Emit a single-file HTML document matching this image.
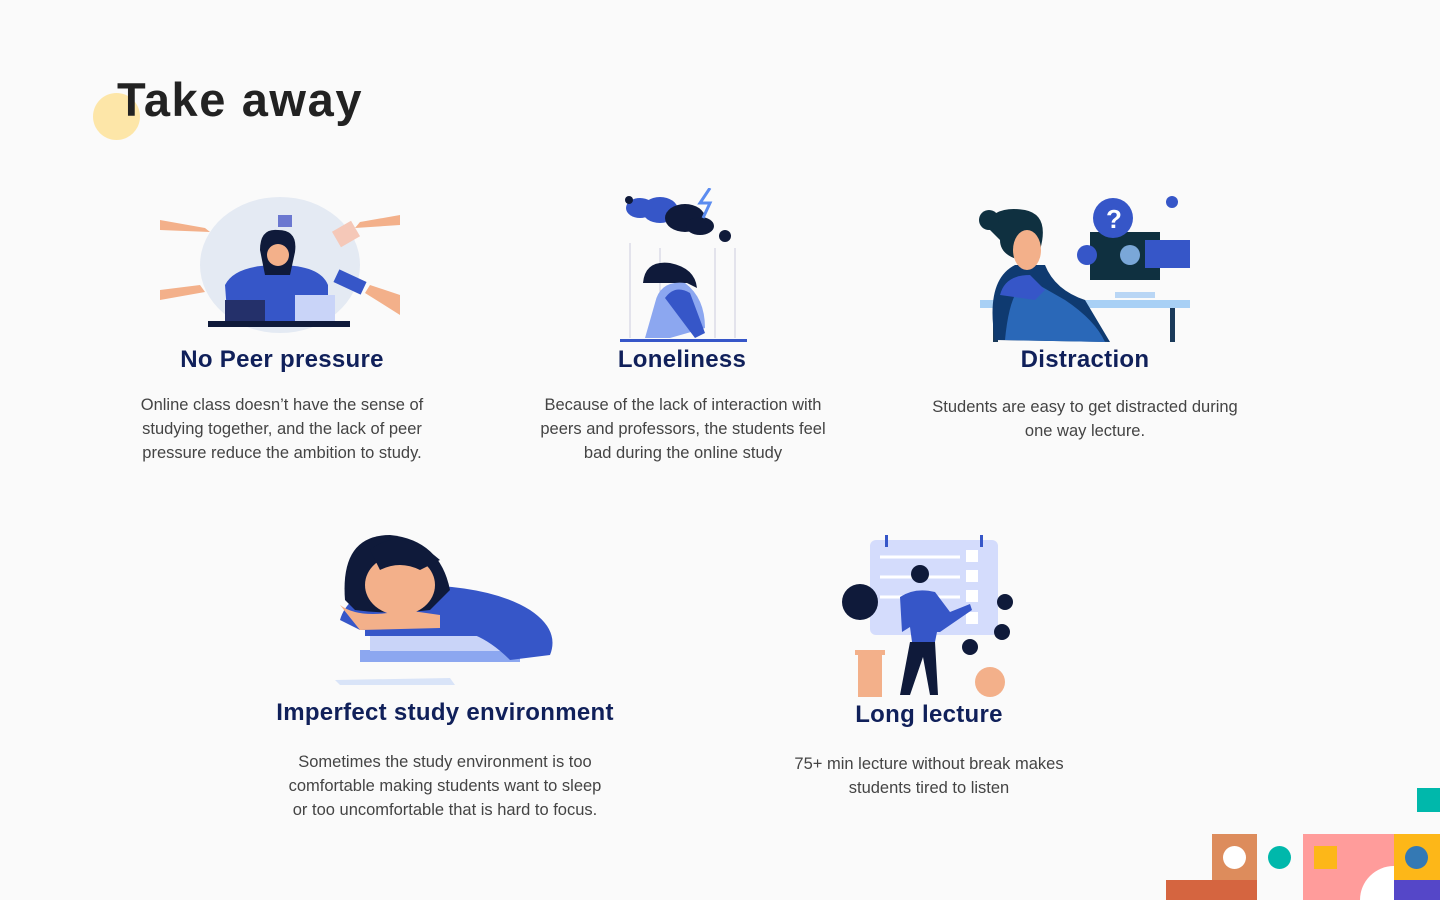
<!DOCTYPE html>
<html><head><meta charset="utf-8"><style>
*{margin:0;padding:0;box-sizing:border-box}
body{width:1440px;height:900px;background:#fafafa;position:relative;overflow:hidden;font-family:"Liberation Sans",sans-serif}
.a{position:absolute}
h1{position:absolute;left:117px;top:72px;font-size:47px;font-weight:bold;color:#222;letter-spacing:1.6px}
.t{position:absolute;text-align:center;font-weight:bold;font-size:24px;color:#10205a;letter-spacing:0.3px}
.p{position:absolute;text-align:center;font-size:16.5px;line-height:24px;color:#444}
</style></head><body>
<div class="a" style="left:93px;top:93px;width:47px;height:47px;border-radius:50%;background:#fde6a8"></div>
<h1>Take away</h1>

<svg class="a" style="left:160px;top:190px" width="245" height="145">
<ellipse cx="120" cy="75" rx="80" ry="68" fill="#e4eaf3"/>
<rect x="118" y="25" width="14" height="12" fill="#6b78d0"/>
<path d="M65 95 Q75 75 118 75 Q160 75 168 95 L168 135 L68 135 Z" fill="#3656c8"/>
<circle cx="118" cy="60" r="16" fill="#f3b08a"/>
<path d="M100 60 Q100 38 118 40 Q138 40 135 62 L130 85 L105 85Z" fill="#0f1a3a"/>
<circle cx="118" cy="65" r="11" fill="#f3b08a"/>
<path d="M0 30 L45 38 L50 42 L0 40Z" fill="#f3b08a"/>
<path d="M240 25 L200 32 L195 38 L240 35Z" fill="#f3b08a"/>
<path d="M0 100 L40 95 L45 102 L0 110Z" fill="#f3b08a"/>
<path d="M240 105 L210 95 L205 103 L240 125Z" fill="#f3b08a"/>
<rect x="175" y="85" width="30" height="14" fill="#3656c8" transform="rotate(25 190 92)"/>
<rect x="175" y="35" width="22" height="18" fill="#f5c8b8" transform="rotate(-30 186 44)"/>
<rect x="135" y="105" width="40" height="27" fill="#c9d4f8"/>
<rect x="65" y="110" width="40" height="22" fill="#24306a"/>
<rect x="48" y="131" width="142" height="6" fill="#0f1a3a"/>
</svg>

<svg class="a" style="left:615px;top:188px" width="135" height="156">
<ellipse cx="25" cy="20" rx="14" ry="10" fill="#3656c8"/>
<ellipse cx="45" cy="22" rx="18" ry="13" fill="#3656c8"/>
<ellipse cx="70" cy="30" rx="20" ry="14" fill="#0f1a3a"/>
<ellipse cx="85" cy="38" rx="14" ry="9" fill="#0f1a3a"/>
<circle cx="110" cy="48" r="6" fill="#0f1a3a"/>
<circle cx="14" cy="12" r="4" fill="#0f1a3a"/>
<path d="M95 0 L85 15 L95 15 L88 30" stroke="#5b8cf0" stroke-width="3" fill="none"/>
<g stroke="#ccd" stroke-width="1"><line x1="15" y1="55" x2="15" y2="150"/><line x1="45" y1="60" x2="45" y2="150"/><line x1="100" y1="60" x2="100" y2="150"/><line x1="120" y1="60" x2="120" y2="150"/></g>
<path d="M28 95 Q30 72 55 75 Q80 80 82 100 L72 95 Z" fill="#0f1a3a"/>
<path d="M40 115 Q45 92 70 95 Q90 110 90 140 L55 150 L30 150 Z" fill="#8ca7f0"/>
<path d="M50 110 Q60 96 75 105 L90 145 L80 150 Z" fill="#3656c8"/>
<rect x="5" y="151" width="127" height="3" fill="#3656c8"/>
</svg>

<svg class="a" style="left:975px;top:190px" width="220" height="155">
<rect x="5" y="110" width="210" height="8" fill="#a8d0f5"/>
<rect x="18" y="118" width="5" height="34" fill="#1a3a5a"/><rect x="195" y="118" width="5" height="34" fill="#1a3a5a"/>
<rect x="115" y="42" width="70" height="48" fill="#0f3040"/>
<rect x="170" y="50" width="45" height="28" fill="#3656c8"/>
<circle cx="155" cy="65" r="10" fill="#7aa7d8"/>
<circle cx="138" cy="28" r="20" fill="#3656c8"/>
<text x="131" y="38" font-size="26" font-weight="bold" fill="#fff" font-family="Liberation Sans">?</text>
<circle cx="112" cy="65" r="10" fill="#3656c8"/>
<circle cx="197" cy="12" r="6" fill="#3656c8"/>
<rect x="140" y="102" width="40" height="6" fill="#b9d6f5"/>
<path d="M20 150 Q10 90 40 75 L70 75 Q80 100 110 110 L135 152Z" fill="#0f3a70"/>
<path d="M30 150 Q35 95 55 90 L90 110 Q120 130 130 152Z" fill="#2a68b8"/>
<path d="M25 105 Q30 85 55 85 L70 100 L60 110 Z" fill="#3656c8"/>
<path d="M10 35 Q20 15 50 20 Q75 25 65 60 L45 70 Q25 65 25 50 Z" fill="#0f3040"/>
<ellipse cx="52" cy="60" rx="14" ry="20" fill="#f3b08a"/>
<circle cx="14" cy="30" r="10" fill="#0f3040"/>
</svg>

<svg class="a" style="left:330px;top:530px" width="230" height="160">
<rect x="30" y="120" width="160" height="12" fill="#8ca7f0"/>
<rect x="40" y="105" width="130" height="16" fill="#c9d4f8"/>
<rect x="35" y="90" width="140" height="16" fill="#3656c8"/>
<path d="M10 90 Q20 55 80 55 Q160 55 200 80 Q230 100 220 125 L180 130 Q150 100 120 100 L30 100 Z" fill="#3656c8"/>
<path d="M15 70 Q10 5 60 5 Q110 10 120 60 L100 80 Q60 85 25 80Z" fill="#0f1a3a"/>
<ellipse cx="70" cy="55" rx="35" ry="30" fill="#f3b08a"/>
<path d="M40 20 Q70 -5 110 30 L90 40 Q70 30 50 40Z" fill="#0f1a3a"/>
<path d="M10 75 Q30 90 75 80 L110 85 L110 98 L30 100Z" fill="#f3b08a"/>
<path d="M5 150 L120 148 L125 155 L10 155Z" fill="#d9e4f8"/>
</svg>

<svg class="a" style="left:840px;top:532px" width="180" height="170">
<rect x="30" y="8" width="128" height="95" rx="6" fill="#d4dcfc"/>
<rect x="45" y="3" width="3" height="12" fill="#3656c8"/><rect x="140" y="3" width="3" height="12" fill="#3656c8"/>
<g stroke="#fff" stroke-width="3"><line x1="40" y1="25" x2="120" y2="25"/><line x1="40" y1="45" x2="120" y2="45"/><line x1="40" y1="65" x2="120" y2="65"/></g>
<rect x="126" y="18" width="12" height="12" fill="#fff"/><rect x="126" y="38" width="12" height="12" fill="#fff"/><rect x="126" y="58" width="12" height="12" fill="#fff"/><rect x="126" y="80" width="12" height="12" fill="#fff"/>
<circle cx="20" cy="70" r="18" fill="#0f1a3a"/>
<rect x="18" y="120" width="24" height="45" fill="#f3b08a"/>
<rect x="15" y="118" width="30" height="5" fill="#f3b08a"/>
<path d="M60 65 Q75 55 95 60 L110 80 L130 72 L132 78 L100 100 L97 100 L95 110 L72 110 L70 95 L62 100Z" fill="#3656c8"/>
<circle cx="80" cy="42" r="9" fill="#0f1a3a"/>
<path d="M70 110 L95 110 L98 163 L90 163 L83 125 L70 163 L60 163Z" fill="#0f1a3a"/>
<circle cx="165" cy="70" r="8" fill="#0f1a3a"/><circle cx="162" cy="100" r="8" fill="#0f1a3a"/><circle cx="130" cy="115" r="8" fill="#0f1a3a"/>
<circle cx="150" cy="150" r="15" fill="#f3b08a"/>
</svg>

<div class="t" style="left:132px;top:346px;width:300px">No Peer pressure</div>
<div class="t" style="left:532px;top:346px;width:300px">Loneliness</div>
<div class="t" style="left:935px;top:346px;width:300px">Distraction</div>
<div class="t" style="left:245px;top:699px;width:400px">Imperfect study environment</div>
<div class="t" style="left:779px;top:701px;width:300px">Long lecture</div>

<div class="p" style="left:112px;top:393px;width:340px">Online class doesn’t have the sense of studying together, and the lack of peer pressure reduce the ambition to study.</div>
<div class="p" style="left:533px;top:393px;width:300px">Because of the lack of interaction with peers and professors, the students feel bad during the online study</div>
<div class="p" style="left:925px;top:395px;width:320px">Students are easy to get distracted during one way lecture.</div>
<div class="p" style="left:280px;top:750px;width:330px">Sometimes the study environment is too comfortable making students want to sleep or too uncomfortable that is hard to focus.</div>
<div class="p" style="left:779px;top:752px;width:300px">75+ min lecture without break makes students tired to listen</div>

<div class="a" style="left:1417px;top:788px;width:23px;height:24px;background:#00b8ab"></div>
<div class="a" style="left:1212px;top:834px;width:45px;height:46px;background:#dd8c5c"></div>
<div class="a" style="left:1223px;top:846px;width:23px;height:23px;border-radius:50%;background:#fff"></div>
<div class="a" style="left:1166px;top:880px;width:91px;height:20px;background:#d56540"></div>
<div class="a" style="left:1268px;top:846px;width:23px;height:23px;border-radius:50%;background:#00b8ab"></div>
<div class="a" style="left:1303px;top:834px;width:91px;height:66px;background:#ff9c9b;overflow:hidden">
  <div class="a" style="left:11px;top:12px;width:23px;height:23px;background:#fdb718"></div>
  <div class="a" style="left:57px;top:32px;width:68px;height:68px;border-radius:50%;background:#fff"></div>
</div>
<div class="a" style="left:1394px;top:834px;width:46px;height:46px;background:#fdb718"></div>
<div class="a" style="left:1405px;top:846px;width:23px;height:23px;border-radius:50%;background:#3479b4"></div>
<div class="a" style="left:1394px;top:880px;width:46px;height:20px;background:#5547c8"></div>
</body></html>
